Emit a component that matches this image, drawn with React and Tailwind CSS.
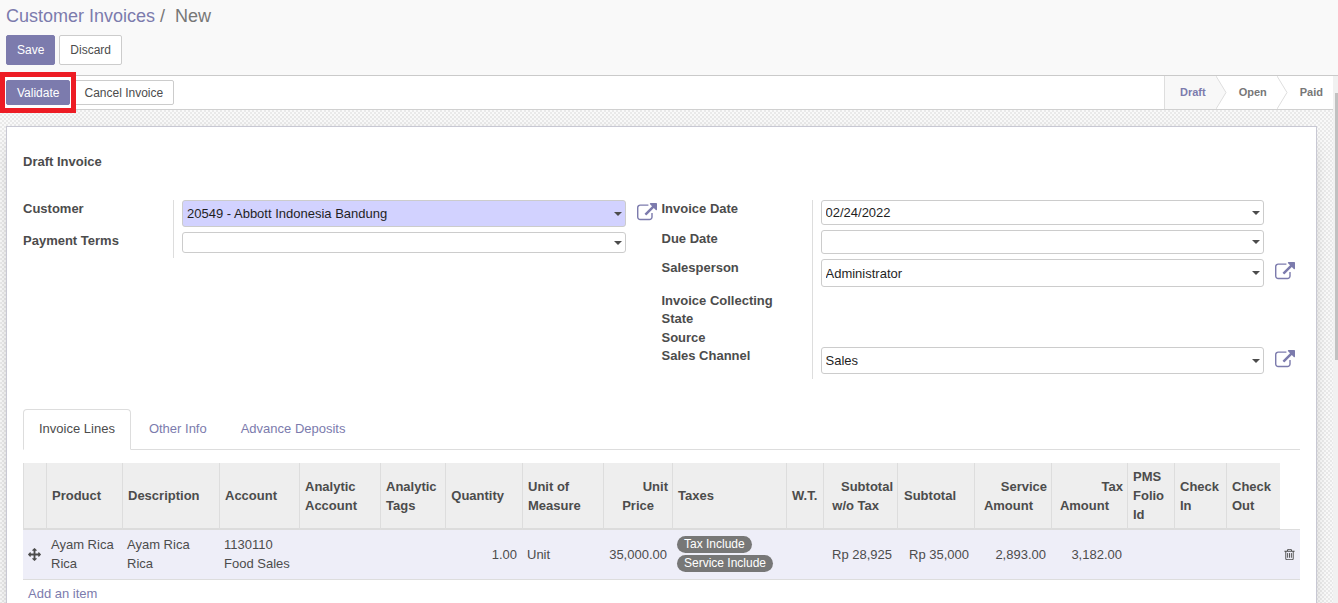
import React, { useState } from 'react';
import clsx from 'clsx';

const COLUMNS = [
  { id: 'handle', label: '', width: 'w-[23px]' },
  { id: 'product', label: 'Product', width: 'w-[76px]' },
  { id: 'description', label: 'Description', width: 'w-[97px]' },
  { id: 'account', label: 'Account', width: 'w-[80px]' },
  { id: 'analyticAccount', label: 'Analytic Account', width: 'w-[81px]' },
  { id: 'analyticTags', label: 'Analytic Tags', width: 'w-[65px]' },
  { id: 'quantity', label: 'Quantity', width: 'w-[77px]', numeric: true },
  { id: 'uom', label: 'Unit of Measure', width: 'w-[81px]' },
  { id: 'price', label: 'Unit Price', width: 'w-[69px]', numeric: true },
  { id: 'taxes', label: 'Taxes', width: '' },
  { id: 'wt', label: 'W.T.', width: 'w-[37px]' },
  { id: 'untaxed', label: 'Subtotal w/o Tax', width: 'w-[74px]', numeric: true },
  { id: 'subtotal', label: 'Subtotal', width: 'w-[77px]', numeric: true },
  { id: 'service', label: 'Service Amount', width: 'w-[77px]', numeric: true },
  { id: 'tax', label: 'Tax Amount', width: 'w-[76px]', numeric: true },
  { id: 'folio', label: 'PMS Folio Id', width: 'w-[47px]' },
  { id: 'checkIn', label: 'Check In', width: 'w-[52px]' },
  { id: 'checkOut', label: 'Check Out', width: 'w-[54px]' },
];

const LINES = [
  {
    product: 'Ayam Rica Rica',
    description: 'Ayam Rica Rica',
    account: '1130110 Food Sales',
    quantity: '1.00',
    uom: 'Unit',
    price: '35,000.00',
    taxes: ['Tax Include', 'Service Include'],
    untaxed: 'Rp 28,925',
    subtotal: 'Rp 35,000',
    service: '2,893.00',
    tax: '3,182.00',
  },
];

const TABS = ['Invoice Lines', 'Other Info', 'Advance Deposits'];

const ExternalLinkIcon = () => (
  <svg viewBox="0 0 1792 1792" className="w-5 h-5 fill-[#7c7bad]" aria-hidden="true">
    <path d="M1408 928v320q0 119-84.5 203.5t-203.5 84.5h-832q-119 0-203.5-84.5t-84.5-203.5v-832q0-119 84.5-203.5t203.5-84.5h704q14 0 23 9t9 23v64q0 14-9 23t-23 9h-704q-66 0-113 47t-47 113v832q0 66 47 113t113 47h832q66 0 113-47t47-113v-320q0-14 9-23t23-9h64q14 0 23 9t9 23zm384-864v512q0 26-19 45t-45 19-45-19l-176-176-652 652q-10 10-23 10t-23-10l-114-114q-10-10-10-23t10-23l652-652-176-176q-19-19-19-45t19-45 45-19h512q26 0 45 19t19 45z" />
  </svg>
);

const MoveIcon = () => (
  <svg viewBox="0 0 1792 1792" className="w-[13px] h-[13px] fill-[#4c4c4c]" aria-hidden="true">
    <path d="M1792 896q0 26-19 45l-256 256q-19 19-45 19t-45-19-19-45v-128h-384v384h128q26 0 45 19t19 45-19 45l-256 256q-19 19-45 19t-45-19l-256-256q-19-19-19-45t19-45 45-19h128v-384h-384v128q0 26-19 45t-45 19-45-19l-256-256q-19-19-19-45t19-45l256-256q19-19 45-19t45 19 19 45v128h384v-384h-128q-26 0-45-19t-19-45 19-45l256-256q19-19 45-19t45 19l256 256q19 19 19 45t-19 45-45 19h-128v384h384v-128q0-26 19-45t45-19 45 19l256 256q19 19 19 45z" />
  </svg>
);

const TrashIcon = () => (
  <svg viewBox="0 0 1792 1792" className="w-[13px] h-[13px] fill-[#4c4c4c]" aria-hidden="true">
    <path d="M704 736v576q0 14-9 23t-23 9h-64q-14 0-23-9t-9-23v-576q0-14 9-23t23-9h64q14 0 23 9t9 23zm256 0v576q0 14-9 23t-23 9h-64q-14 0-23-9t-9-23v-576q0-14 9-23t23-9h64q14 0 23 9t9 23zm256 0v576q0 14-9 23t-23 9h-64q-14 0-23-9t-9-23v-576q0-14 9-23t23-9h64q14 0 23 9t9 23zm128 724v-948h-896v948q0 22 7 40.5t14.5 27 10.5 8.5h832q3 0 10.5-8.5t14.5-27 7-40.5zm-672-1076h448l-48-117q-7-9-17-11h-317q-10 2-17 11zm928 32v64q0 14-9 23t-23 9h-96v948q0 83-47 143.5t-113 60.5h-832q-66 0-113-58.5t-47-141.5v-952h-96q-14 0-23-9t-9-23v-64q0-14 9-23t23-9h309l70-167q15-37 54-63t79-26h320q40 0 79 26t54 63l70 167h309q14 0 23 9t9 23z" />
  </svg>
);

const StepArrow = ({ filled }) => (
  <svg viewBox="0 0 11 33" className="w-[11px] h-[33px] shrink-0" aria-hidden="true">
    <path d="M0 0L10 16.5L0 33" fill={filled ? '#f8f8f8' : '#ffffff'} stroke="#dedede" />
  </svg>
);

function Button({ primary, className, children }) {
  return (
    <button
      type="button"
      className={clsx(
        'px-2.5 rounded-[2px] border text-xs cursor-pointer',
        primary ? 'bg-[#7c7bad] border-[#7c7bad] text-white' : 'bg-white border-[#cccccc] text-[#4c4c4c]',
        className,
      )}
    >
      {children}
    </button>
  );
}

// One label + field line of a form group
function Field({ id, label, value, kind = 'select', height, required, link }) {
  const box = clsx(
    'block w-full h-full pl-1 pr-5 rounded-[3px] border border-[#cccccc] text-[13px] text-[#1f1f1f] outline-none appearance-none',
    required ? 'bg-[#d2d2ff]' : 'bg-white',
  );

  return (
    <div className="flex">
      <label htmlFor={id} className="w-[150px] shrink-0 font-bold leading-[18px]">{label}</label>
      <div className="flex flex-1 border-l border-[#dddddd] pl-2 pb-[5px]">
        <div className={clsx('relative flex-1', height)}>
          {kind === 'select' ? (
            <select id={id} defaultValue={value} className={box}>
              <option>{value}</option>
            </select>
          ) : (
            <input id={id} type="text" defaultValue={value} className={box} />
          )}
          <span className="absolute right-1 top-1/2 -mt-0.5 border-x-4 border-t-4 border-x-transparent border-t-[#4c4c4c] pointer-events-none" />
        </div>
        <div className="w-9 shrink-0 flex justify-end items-start pt-[3px] pr-[5px]">
          {link && <button type="button" aria-label={`Open ${label}`} className="cursor-pointer"><ExternalLinkIcon /></button>}
        </div>
      </div>
    </div>
  );
}

function EmptyField({ label, height }) {
  return (
    <div className={clsx('flex', height)}>
      <span className="w-[150px] shrink-0 pr-8 font-bold leading-[18px]">{label}</span>
      <div className="flex-1 border-l border-[#dddddd]" />
    </div>
  );
}

function Cell({ column, line }) {
  const value = line[column.id];
  if (column.id === 'handle') return <MoveIcon />;
  if (column.id === 'taxes') {
    return (
      <div className="flex flex-col items-start gap-0.5">
        {value.map(tax => (
          <span key={tax} className="px-[7px] rounded-full bg-[#777777] text-white text-xs leading-[17px] whitespace-nowrap">{tax}</span>
        ))}
      </div>
    );
  }
  return value || null;
}

export default function App() {
  const [tab, setTab] = useState(TABS[0]);

  return (
    <div className="h-screen flex flex-col overflow-hidden bg-white text-[13px] leading-[19px] text-[#4c4c4c] font-['Liberation_Sans',Arial,sans-serif]">
      {/* Control panel */}
      <header className="shrink-0 bg-[#f9f9f9] border-b border-[#cacaca] px-1.5 pt-1 pb-2.5">
        <nav className="flex text-lg leading-6 text-[#777777]">
          <a href="#invoices" className="text-[#7c7bad]">Customer Invoices</a>
          <span className="px-[5px]">/</span>
          <span className="pl-[5px]">New</span>
        </nav>
        <div className="flex gap-1 mt-[7px]">
          <Button primary className="h-[30px]">Save</Button>
          <Button className="h-[30px]">Discard</Button>
        </div>
      </header>

      <div className="flex flex-1 min-h-0">
        <main className="flex-1 min-w-0 bg-[repeating-conic-gradient(#e9e9e9_0_25%,#f9f9f9_0_50%)] bg-[length:4px_4px]">
          {/* Status bar */}
          <div className="flex justify-between bg-white border-b border-[#d0d0d0] pl-1.5">
            <div className="flex items-center gap-[3px]">
              <div className="relative z-10 flex">
                <Button primary className="h-[25px]">Validate</Button>
                <span className="absolute -left-1.5 -right-1.5 -top-2 -bottom-2 border-[5px] border-[#ed1c24] pointer-events-none" />
              </div>
              <Button className="h-[25px]">Cancel Invoice</Button>
            </div>
            <ol className="flex items-center text-[11px] font-bold text-[#777777]">
              <li className="h-[33px] pl-[15px] pr-2.5 flex items-center bg-[#f8f8f8] border-l border-[#dedede] text-[#7c7bad]">Draft</li>
              <StepArrow filled />
              <li className="pl-3 pr-2.5">Open</li>
              <StepArrow />
              <li className="pl-3 pr-2.5">Paid</li>
            </ol>
          </div>

          {/* Sheet */}
          <section className="mt-4 ml-1.5 mr-4 px-4 pt-[25px] pb-4 bg-white border border-[#c8c8d3] shadow-[0_5px_20px_-15px_black]">
            <h1 className="font-bold">Draft Invoice</h1>

            <div className="grid grid-cols-2 items-start mt-[29px]">
              <div>
                <Field id="customer" label="Customer" value="20549 - Abbott Indonesia Bandung" height="h-[27px]" required link />
                <Field id="terms" label="Payment Terms" value="" height="h-[21px]" />
              </div>
              <div>
                <Field id="invoice-date" label="Invoice Date" value="02/24/2022" kind="text" height="h-[25px]" />
                <Field id="due-date" label="Due Date" value="" kind="text" height="h-[24px]" />
                <Field id="salesperson" label="Salesperson" value="Administrator" height="h-[28px]" link />
                <EmptyField label="Invoice Collecting State" height="h-[37px]" />
                <EmptyField label="Source" height="h-[18px]" />
                <Field id="channel" label="Sales Channel" value="Sales" height="h-[27px]" link />
              </div>
            </div>

            {/* Notebook */}
            <div role="tablist" className="flex gap-0.5 mt-[30px] border-b border-[#dddddd]">
              {TABS.map(name => (
                <button
                  key={name}
                  type="button"
                  role="tab"
                  aria-selected={tab === name}
                  onClick={() => setTab(name)}
                  className={clsx(
                    '-mb-px px-[15px] pt-[9px] pb-[11px] rounded-t border cursor-pointer',
                    tab === name ? 'bg-white border-[#dddddd] border-b-white' : 'border-transparent text-[#7c7bad]',
                  )}
                >
                  {name}
                </button>
              ))}
            </div>

            <table className="w-full table-fixed mt-[13px] border-separate border-spacing-0">
              <colgroup>
                {COLUMNS.map(c => <col key={c.id} className={c.width} />)}
                <col className="w-5" />
              </colgroup>
              <thead>
                <tr>
                  {COLUMNS.map(c => (
                    <th
                      key={c.id}
                      className={clsx(
                        'pl-[5px] pr-[4px] py-1 align-middle bg-[#eeeeee] border-l border-b-2 border-l-[#dddddd] border-b-[#dcdcdc]',
                        c.numeric ? 'text-right' : 'text-left',
                      )}
                    >
                      <span className={c.numeric ? 'pr-[14px]' : ''}>{c.label}</span>
                    </th>
                  ))}
                  <th aria-label="Delete" className="border-b border-[#dddddd]" />
                </tr>
              </thead>
              <tbody>
                {LINES.map((line, i) => (
                  <tr key={i} className="bg-[#eeeef8]">
                    {COLUMNS.map(c => (
                      <td key={c.id} className={clsx('px-[5px] pt-[5px] pb-1.5 align-middle border-b border-[#dddddd]', c.numeric && 'text-right whitespace-nowrap')}>
                        <Cell column={c} line={line} />
                      </td>
                    ))}
                    <td className="align-middle border-b border-[#dddddd] pl-[3px]">
                      <button type="button" aria-label="Delete line" className="block cursor-pointer"><TrashIcon /></button>
                    </td>
                  </tr>
                ))}
              </tbody>
            </table>
            <a href="#add" className="inline-block mt-1 ml-[5px] text-[#7c7bad]">Add an item</a>
          </section>
        </main>

        {/* Scroll track */}
        <div className="w-[5px] shrink-0 bg-[#f1f1f1] pt-[17px] pl-0.5">
          <div className="h-[267px] bg-[#c1c1c1]" />
        </div>
      </div>
    </div>
  );
}
